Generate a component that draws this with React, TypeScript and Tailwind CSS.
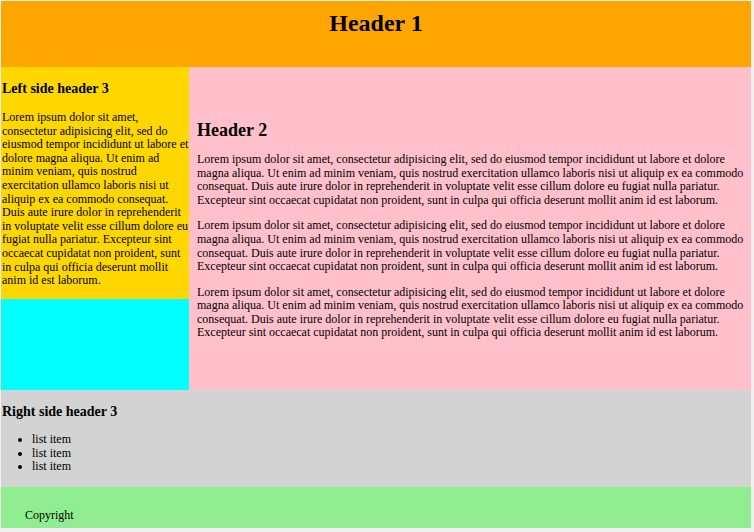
import React from "react";

const LOREM =
  "Lorem ipsum dolor sit amet, consectetur adipisicing elit, sed do eiusmod tempor incididunt ut labore et dolore magna aliqua. Ut enim ad minim veniam, quis nostrud exercitation ullamco laboris nisi ut aliquip ex ea commodo consequat. Duis aute irure dolor in reprehenderit in voluptate velit esse cillum dolore eu fugiat nulla pariatur. Excepteur sint occaecat cupidatat non proident, sunt in culpa qui officia deserunt mollit anim id est laborum.";

export default function App() {
  return (
    <div
      className="w-[754px] h-[532px] bg-[#efefef] pt-[1px] pl-[1px] overflow-hidden text-black"
      style={{ fontFamily: '"Liberation Serif", "Times New Roman", serif' }}
    >
      <div className="w-[750px] flex flex-col">
        <header className="h-[66px] bg-[#ffa500] pt-[8px]">
          <h1 className="text-center text-[24px] leading-[28px] font-bold">Header 1</h1>
        </header>
        <div className="flex h-[323px]">
          <aside className="w-[188px] bg-[#00ffff] flex flex-col">
            <div className="bg-[#ffd700] pt-[14px] pb-[11px] pl-[1px]">
              <h3 className="text-[14px] leading-[16px] font-bold mb-[14px]">Left side header 3</h3>
              <p className="text-[12px] leading-[13.6px]">{LOREM}</p>
            </div>
          </aside>
          <main className="flex-1 bg-[#ffc0cb] flex flex-col justify-center pl-[8px] pr-0">
            <div className="pt-[15px] pb-[12px]">
              <h2 className="text-[18px] leading-[21px] font-bold mb-[12px]">Header 2</h2>
              <p className="text-[12px] leading-[13.6px] mb-[12px]">{LOREM}</p>
              <p className="text-[12px] leading-[13.6px] mb-[12px]">{LOREM}</p>
              <p className="text-[12px] leading-[13.6px]">{LOREM}</p>
            </div>
          </main>
        </div>
        <section className="h-[97px] bg-[#d3d3d3] pt-[14px] pl-[1px]">
          <h3 className="text-[14px] leading-[16px] font-bold mb-[13px]">Right side header 3</h3>
          <ul className="list-disc pl-[30px] text-[12px] leading-[13.6px]">
            <li>list item</li>
            <li>list item</li>
            <li>list item</li>
          </ul>
        </section>
        <footer className="h-[41px] bg-[#90ee90] pt-[22px] pl-[24px]">
          <p className="text-[12px] leading-[13.6px]">Copyright</p>
        </footer>
      </div>
    </div>
  );
}
